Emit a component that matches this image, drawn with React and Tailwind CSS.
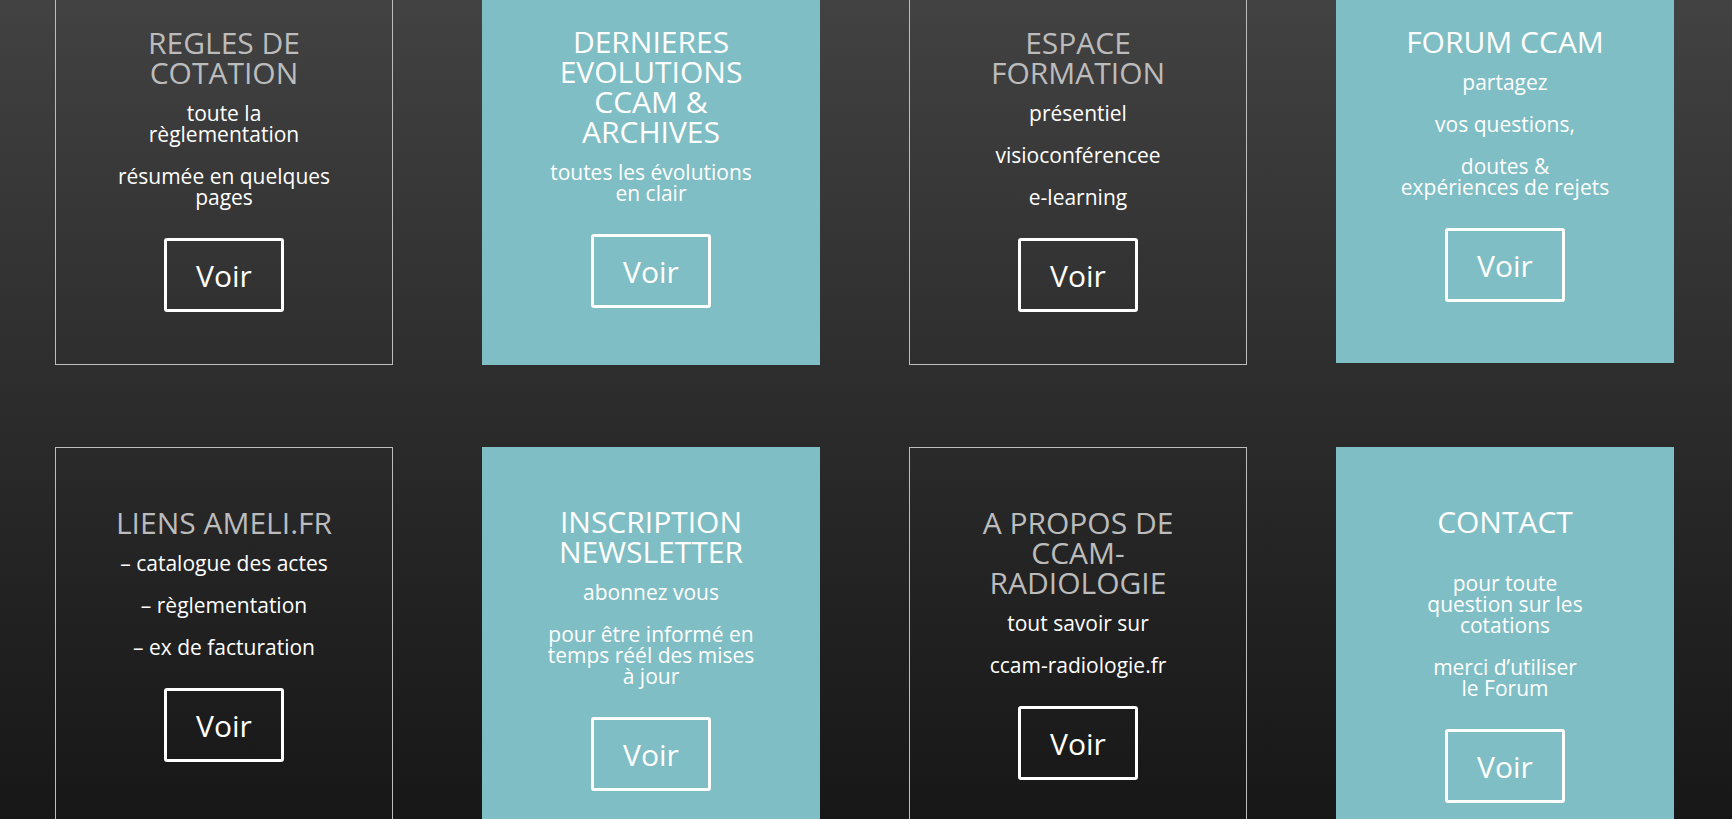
import React from "react";

const cards = [
  {
    teal: false,
    h: "h-[398px]",
    title: ["REGLES DE", "COTATION"],
    paras: [["toute la", "règlementation"], ["résumée en quelques", "pages"]],
  },
  {
    teal: true,
    h: "h-[398px]",
    title: ["DERNIERES", "EVOLUTIONS", "CCAM &", "ARCHIVES"],
    paras: [["toutes les évolutions", "en clair"]],
  },
  {
    teal: false,
    h: "h-[398px]",
    title: ["ESPACE", "FORMATION"],
    paras: [["présentiel"], ["visioconférencee"], ["e-learning"]],
  },
  {
    teal: true,
    h: "h-[396px]",
    title: ["FORUM CCAM"],
    paras: [["partagez"], ["vos questions,"], ["doutes &", "expériences de rejets"]],
  },
  {
    teal: false,
    h: "h-[398px]",
    title: ["LIENS AMELI.FR"],
    paras: [["– catalogue des actes"], ["– règlementation"], ["– ex de facturation"]],
  },
  {
    teal: true,
    h: "h-[398px]",
    title: ["INSCRIPTION", "NEWSLETTER"],
    paras: [["abonnez vous"], ["pour être informé en", "temps réél des mises", "à jour"]],
  },
  {
    teal: false,
    h: "h-[398px]",
    title: ["A PROPOS DE", "CCAM-", "RADIOLOGIE"],
    paras: [["tout savoir sur"], ["ccam-radiologie.fr"]],
  },
  {
    teal: true,
    h: "h-[398px]",
    blank: true,
    title: ["CONTACT"],
    paras: [["pour toute", "question sur les", "cotations"], ["merci d’utiliser", "le Forum"]],
  },
];

function Card({ c }) {
  return (
    <div
      className={
        "flex flex-col items-center pt-[60px] text-center " +
        c.h +
        " " +
        (c.teal ? "bg-[#7fbec4]" : "border border-[#bdbdbd]")
      }
    >
      <h4
        className={
          "text-[30px] leading-[30px] font-normal whitespace-nowrap " +
          (c.teal ? "text-white" : "text-[#bcbcbc]")
        }
      >
        {c.title.map((t, i) => (
          <div key={i}>{t}</div>
        ))}
      </h4>
      <div className={"text-white text-[21px] leading-[21px] whitespace-nowrap " + (c.blank ? "mt-[36px]" : "mt-[15px]")}>
        {c.paras.map((p, i) => (
          <p key={i} className={i > 0 ? "mt-[21px]" : ""}>
            {p.map((l, j) => (
              <span key={j} className="block">
                {l}
              </span>
            ))}
          </p>
        ))}
      </div>
      <a className="mt-[30px] flex h-[74px] w-[120px] items-center justify-center rounded-[3px] border-[3px] border-white text-[30px] text-white">
        Voir
      </a>
    </div>
  );
}

export default function App() {
  return (
    <div
      className="h-[819px] w-full overflow-hidden bg-linear-to-b from-[#424242] to-[#171717]"
      style={{ fontFamily: "'Open Sans', 'Noto Sans', sans-serif" }}
    >
      <div className="-mt-[33px] grid grid-cols-[repeat(4,338px)] items-start gap-x-[89px] gap-y-[82px] pl-[55px]">
        {cards.map((c, i) => (
          <Card key={i} c={c} />
        ))}
      </div>
    </div>
  );
}
